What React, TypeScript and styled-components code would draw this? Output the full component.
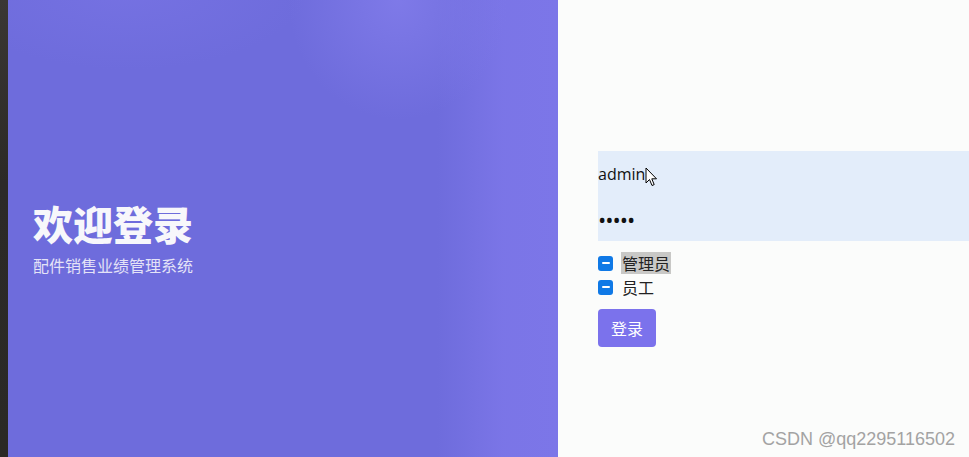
import styled, { createGlobalStyle } from 'styled-components';

const GlobalStyle = createGlobalStyle`
  html, body {
    margin: 0;
    padding: 0;
    height: 100%;
  }
  body {
    font-family: "Noto Sans", "Noto Sans CJK SC", sans-serif;
    overflow: hidden;
  }
`;

const Page = styled.div`
  display: flex;
  height: 100vh;
  position: relative;
`;

const EdgeStrip = styled.div`
  width: 8px;
  flex-shrink: 0;
  background: linear-gradient(180deg, #3a3733 0%, #2c2a27 40%, #2a2926 100%);
`;

const Hero = styled.div`
  width: 550px;
  flex-shrink: 0;
  display: flex;
  flex-direction: column;
  padding: 199px 0 0 25px;
  box-sizing: border-box;
  background:
    radial-gradient(ellipse 110px 120px at 390px 0px, rgba(132, 126, 236, 0.75), rgba(132, 126, 236, 0) 100%),
    radial-gradient(ellipse 180px 80px at 120px -10px, rgba(122, 117, 230, 0.6), rgba(122, 117, 230, 0) 100%),
    linear-gradient(90deg, rgba(110, 108, 220, 0) 0%, rgba(110, 108, 220, 0) 78%, rgba(124, 118, 232, 0.9) 90%, rgba(124, 118, 232, 1) 100%),
    #6e6cdc;
`;

const Title = styled.h1`
  margin: 0;
  font-family: "Noto Sans CJK SC", sans-serif;
  font-size: 40px;
  font-weight: 900;
  line-height: 48px;
  color: #f7f7fb;
`;

const Subtitle = styled.p`
  margin: 7px 0 0;
  font-family: "Noto Sans CJK SC", sans-serif;
  font-size: 16px;
  line-height: 22px;
  color: #e4e3f7;
`;

const FormSide = styled.div`
  flex: 1;
  background: #fbfcfb;
  padding: 151px 0 0 40px;
  box-sizing: border-box;
`;

const Form = styled.form`
  display: flex;
  flex-direction: column;
`;

const Fields = styled.div`
  background: #e3edfa;
  display: flex;
  flex-direction: column;
`;

const Field = styled.input`
  border: none;
  outline: none;
  background: transparent;
  height: 45px;
  padding: 0;
  font-family: "Open Sans", "Noto Sans", sans-serif;
  font-size: ${(p) => (p.type === 'password' ? '22px' : '16px')};
  letter-spacing: ${(p) => (p.type === 'password' ? '-1px' : '0')};
  color: #111;
`;

const RoleList = styled.div`
  display: flex;
  flex-direction: column;
  gap: 2px;
  margin-top: 11px;
`;

const RoleRow = styled.label`
  display: flex;
  align-items: center;
  gap: 8px;
  height: 22px;
  font-family: "Noto Sans CJK SC", sans-serif;
  font-size: 16px;
  color: #222;
`;

const Box = styled.span`
  width: 15px;
  height: 15px;
  border-radius: 3px;
  background: #0f79e6;
  display: flex;
  align-items: center;
  justify-content: center;
`;

const Dash = styled.span`
  width: 8px;
  height: 2px;
  background: #fff;
  border-radius: 1px;
`;

const RoleText = styled.span<{ $selected?: boolean }>`
  background: ${(p) => (p.$selected ? '#c8c8c6' : 'transparent')};
  padding: 0 1px;
  line-height: 22px;
`;

const Submit = styled.button`
  margin-top: 11px;
  align-self: flex-start;
  width: 58px;
  height: 38px;
  border: none;
  border-radius: 4px;
  background: #7b72ec;
  color: #fff;
  font-family: "Noto Sans CJK SC", sans-serif;
  font-size: 16px;
  cursor: pointer;
`;

const Pointer = styled.svg`
  position: absolute;
  left: 645px;
  top: 167px;
  pointer-events: none;
`;

const Watermark = styled.div`
  position: absolute;
  right: 14px;
  bottom: 7px;
  font-family: "Liberation Sans", Arial, sans-serif;
  font-size: 18px;
  color: #a3a3a3;
`;

export default function App() {
  return (
    <>
      <GlobalStyle />
      <Page>
        <EdgeStrip />
        <Hero>
          <Title>欢迎登录</Title>
          <Subtitle>配件销售业绩管理系统</Subtitle>
        </Hero>
        <FormSide>
          <Form onSubmit={(e) => e.preventDefault()}>
            <Fields>
              <Field type="text" defaultValue="admin" />
              <Field type="password" defaultValue="12345" />
            </Fields>
            <RoleList>
              <RoleRow>
                <Box>
                  <Dash />
                </Box>
                <RoleText $selected>管理员</RoleText>
              </RoleRow>
              <RoleRow>
                <Box>
                  <Dash />
                </Box>
                <RoleText>员工</RoleText>
              </RoleRow>
            </RoleList>
            <Submit type="submit">登录</Submit>
          </Form>
        </FormSide>
        <Pointer width="13" height="21" viewBox="0 0 13 21">
          <path
            d="M1 1 L1 16 L4.5 12.5 L7 18.5 L9.2 17.6 L6.8 11.8 L11.5 11.8 Z"
            fill="#fff"
            stroke="#000"
            strokeWidth="1"
            strokeLinejoin="round"
          />
        </Pointer>
        <Watermark>CSDN @qq2295116502</Watermark>
      </Page>
    </>
  );
}
